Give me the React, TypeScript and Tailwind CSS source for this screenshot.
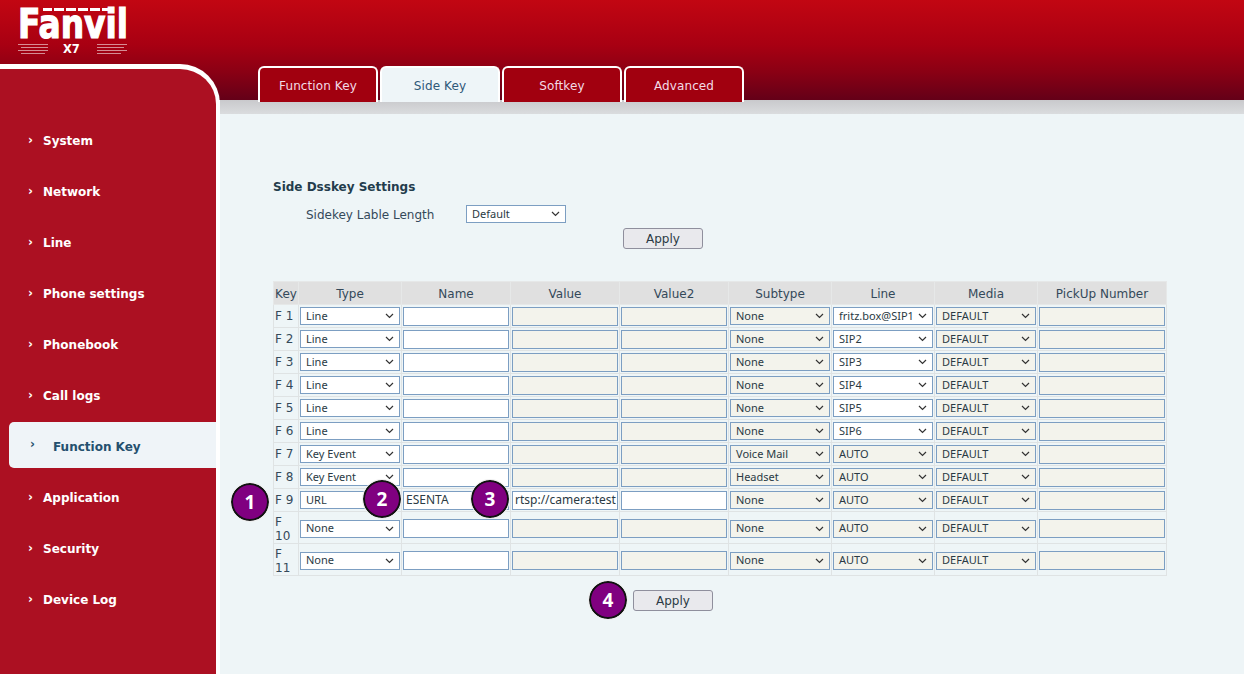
const nav = ["System","Network","Line","Phone settings","Phonebook","Call logs","Function Key","Application","Security","Device Log"];
const tabs = ["Function Key","Side Key","Softkey","Advanced"];
type Row = {k:string;type:string;name?:string;value?:string;sub:string;line:string;valueOn?:boolean;value2On?:boolean;tall?:boolean};
const rows: Row[] = [
 {k:"F 1",type:"Line",sub:"None",line:"fritz.box@SIP1"},
 {k:"F 2",type:"Line",sub:"None",line:"SIP2"},
 {k:"F 3",type:"Line",sub:"None",line:"SIP3"},
 {k:"F 4",type:"Line",sub:"None",line:"SIP4"},
 {k:"F 5",type:"Line",sub:"None",line:"SIP5"},
 {k:"F 6",type:"Line",sub:"None",line:"SIP6"},
 {k:"F 7",type:"Key Event",sub:"Voice Mail",line:"AUTO"},
 {k:"F 8",type:"Key Event",sub:"Headset",line:"AUTO"},
 {k:"F 9",type:"URL",name:"ESENTA",value:"rtsp://camera:test",sub:"None",line:"AUTO",valueOn:true,value2On:true},
 {k:"F 10",type:"None",sub:"None",line:"AUTO",tall:true},
 {k:"F 11",type:"None",sub:"None",line:"AUTO",tall:true},
];
function Chevron(){return <svg width="9" height="6" viewBox="0 0 9 6" className="shrink-0"><path d="M1 1l3.5 3.5L8 1" fill="none" stroke="#333" strokeWidth="1.2"/></svg>}
function Sel({v,off,w="w-full"}:{v:string;off?:boolean;w?:string}){
 return <div className={`${w} h-[18px] border border-[#7c9ec2] flex items-center justify-between pl-[5px] pr-[5px] text-[11px] text-[#2a3a44] [font-family:'Noto_Sans',sans-serif] ${off?"bg-[#f3f3ec]":"bg-white"}`}><span className="whitespace-nowrap">{v}</span><Chevron/></div>
}
function Inp({v,on}:{v?:string;on?:boolean}){
 return <div className={`w-full h-[19px] border border-[#7c9ec2] flex items-center px-[2px] text-[12px] leading-none text-[#2a3a44] whitespace-nowrap overflow-hidden [font-family:'Noto_Sans',sans-serif] ${on?"bg-white":"bg-[#f3f3ec]"}`}>{v}</div>
}
function Btn(){return <div className="w-[80px] h-[21px] rounded-[3px] border border-[#8f8f9d] bg-[#e9e9ed] flex items-center justify-center text-[12px] text-[#2a3a44]">Apply</div>}
function Badge({n,className}:{n:number;className:string}){
 return <div className={`absolute w-[38px] h-[38px] rounded-full bg-[#800080] border-2 border-[#111] outline outline-1 outline-[#eee] flex items-center justify-center text-white font-bold text-[19px] [font-family:'Noto_Sans',sans-serif] ${className}`}>{n}</div>
}
const tdBase="border border-[#dfe3e4] px-px align-middle";
export default function App(){
 return <div className="relative w-[1244px] h-[674px] overflow-hidden flex bg-white bg-[linear-gradient(#c20612_0%,#a80012_45%,#8a0014_72%,#640018_100%)] bg-no-repeat bg-[length:100%_100px] [font-family:'DejaVu_Sans',sans-serif]">
  <div className="w-[220px] shrink-0 flex flex-col">
   <div className="h-[64px] shrink-0 pl-[16px]">
    <svg width="116" height="59" viewBox="-2 -7 116 59" className="overflow-visible">
     <g fill="#fff">
      <rect x="25" y="1" width="9" height="3"/><rect x="36" y="1" width="10" height="3"/><rect x="48" y="1" width="10" height="3"/><rect x="60" y="1" width="10" height="3"/><rect x="72" y="1" width="10" height="3"/><rect x="84" y="1" width="11" height="3"/>
      <text x="0" y="31" fontFamily="'DejaVu Sans'" fontWeight="700" fontSize="40" textLength="110" lengthAdjust="spacingAndGlyphs" stroke="#fff" strokeWidth="1.2">Fanvil</text>
      <text x="45" y="46" fontFamily="'DejaVu Sans'" fontWeight="700" fontSize="11.5">X7</text>
     </g>
     <g stroke="#fff" strokeWidth="1" opacity="0.55">
      <path d="M0 37.5h30M3 40.5h27M0 43.5h30M3 46.5h24M79 37.5h30M79 40.5h27M79 43.5h30M79 46.5h24"/>
     </g>
    </svg>
   </div>
   <div className="flex-1 bg-[#ac1022] border-t-[5px] border-r-[4px] border-white rounded-tr-[40px] pt-[46px]">
    {nav.map(n=>{const a=n==="Function Key";return <div key={n} className={a?"ml-[9px] h-[46px] mt-[1px] mb-[4px] pt-[3px] rounded-l-[5px] bg-[#eff4f8] flex items-center pl-[21px] text-[#24506e] font-bold text-[12px]":"h-[51px] flex items-center pl-[28px] text-white font-bold text-[12px]"}>
      <span className={a?"w-[23px] text-[12px] leading-none -mt-[6px]":"w-[15px] text-[12px] leading-none -mt-[2px]"}>›</span>{n}</div>})}
   </div>
  </div>
  <div className="flex-1 flex flex-col min-w-0">
   <div className="h-[100px] shrink-0 pl-[38px] pt-[66px] flex gap-[2px]">
    {tabs.map(t=>{const a=t==="Side Key";return <div key={t} className={`relative z-10 w-[120px] h-[36px] pt-[2px] rounded-t-[6px] border-2 border-b-0 border-white flex items-center justify-center text-[12px] tracking-[0.1px] ${a?"bg-[#eef5f8] text-[#2f5878]":"bg-[#a1000f] text-[#f3dbe6]"}`}>{t}</div>})}
   </div>
   <div className="h-[14px] shrink-0 bg-[linear-gradient(#c9c9cc,#dadcde)]"/>
   <div className="flex-1 bg-[#eef5f7] pl-[53px] relative text-[#34495a]">
    <div className="pt-[66px] font-bold text-[12px] leading-[14px] text-[#233c4c]">Side Dsskey Settings</div>
    <div className="flex items-center mt-[11px] pl-[33px] h-[18px] text-[12px]">
     <span className="w-[160px] pt-[2px]">Sidekey Lable Length</span>
     <Sel v="Default" w="w-[100px]"/>
    </div>
    <div className="mt-[5px] ml-[350px]"><Btn/></div>
    <table className="mt-[32px] w-[894px] table-fixed border-collapse text-[12px] text-[#34495a]">
     <colgroup><col className="w-[25px]"/><col className="w-[103px]"/><col className="w-[109px]"/><col className="w-[109px]"/><col className="w-[109px]"/><col className="w-[103px]"/><col className="w-[103px]"/><col className="w-[103px]"/><col/></colgroup>
     <thead><tr className="h-[23px] bg-[#e0e0e0] font-normal">
      {["Key","Type","Name","Value","Value2","Subtype","Line","Media","PickUp Number"].map(h=><th key={h} className="border border-[#e6e8e8] font-normal p-0 pt-[2px] whitespace-nowrap">{h}</th>)}
     </tr></thead>
     <tbody>
      {rows.map(r=>{const td=`${tdBase} ${r.tall?"pt-[2px] pb-0":"py-0"}`;return <tr key={r.k} className={r.tall?"h-[32px]":"h-[23px]"}>
       <td className={`${td} leading-[14px]`}>{r.tall?<span className="block w-[14px]">{r.k}</span>:r.k}</td>
       <td className={td}><Sel v={r.type}/></td>
       <td className={td}><Inp v={r.name} on/></td>
       <td className={td}><Inp v={r.value} on={r.valueOn}/></td>
       <td className={td}><Inp on={r.value2On}/></td>
       <td className={td}><Sel v={r.sub} off/></td>
       <td className={td}><Sel v={r.line} off={r.line==="AUTO"}/></td>
       <td className={td}><Sel v="DEFAULT" off/></td>
       <td className={td}><Inp/></td>
      </tr>})}
     </tbody>
    </table>
    <div className="mt-[14px] ml-[360px]"><Btn/></div>
    <Badge n={1} className="left-[11px] top-[369px]"/>
    <Badge n={2} className="left-[143px] top-[366px]"/>
    <Badge n={3} className="left-[251px] top-[366px]"/>
    <Badge n={4} className="left-[369px] top-[467px]"/>
   </div>
  </div>
 </div>
}
